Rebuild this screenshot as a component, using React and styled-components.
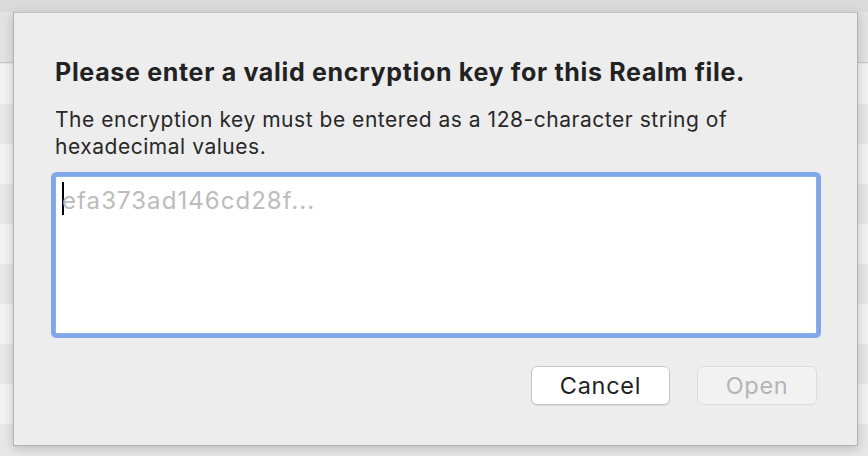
import React from "react";
import styled, { createGlobalStyle } from "styled-components";

const GlobalStyle = createGlobalStyle`
  html, body {
    margin: 0;
    padding: 0;
    width: 868px;
    height: 456px;
    overflow: hidden;
  }
  body {
    font-family: Inter, "Noto Sans", "Liberation Sans", sans-serif;
    -webkit-font-smoothing: antialiased;
  }
`;

const App = () => {
  return (
    <>
      <GlobalStyle />
      <Page>
        <WindowStrip />
        <WindowBody>
          <Sheet>
            <Title>Please enter a valid encryption key for this Realm file.</Title>
            <Message>
              The encryption key must be entered as a 128-character string of
              hexadecimal values.
            </Message>
            <KeyField>
              <Caret />
              <Placeholder>efa373ad146cd28f...</Placeholder>
            </KeyField>
            <Actions>
              <Button>Cancel</Button>
              <Button $disabled>Open</Button>
            </Actions>
          </Sheet>
        </WindowBody>
      </Page>
    </>
  );
};

export default App;

// ---------- Styled Components ----------
const Page = styled.div`
  display: flex;
  flex-direction: column;
  width: 868px;
  height: 456px;
  background: #e6e6e6;
`;

const WindowStrip = styled.div`
  height: 12px;
  flex-shrink: 0;
  background: #dadada;
`;

const WindowBody = styled.div`
  flex: 1;
  display: flex;
  align-items: flex-start;
  padding-left: 13px;
  background:
    linear-gradient(#e2e2e2, #e2e2e2) 0 0 / 100% 50px no-repeat,
    linear-gradient(#c8c8c8, #c8c8c8) 0 50px / 100% 1px no-repeat,
    repeating-linear-gradient(#e7e7e7 0 40px, #f2f2f2 40px 80px) 0 12px / 100% 80px;
`;

const Sheet = styled.div`
  box-sizing: border-box;
  width: 845px;
  height: 434px;
  display: flex;
  flex-direction: column;
  padding: 0 40px 0 41px;
  background: #ededed;
  border: 1px solid #b2b2b2;
  border-top-color: #c4c4c4;
  box-shadow: 0 3px 10px rgba(0, 0, 0, 0.18);
`;

const Title = styled.h1`
  margin: 44px 0 0;
  font-size: 25px;
  line-height: 30px;
  font-weight: 700;
  color: #222222;
  letter-spacing: 0.68px;
  white-space: nowrap;
`;

const Message = styled.p`
  margin: 19px 0 0;
  font-size: 21px;
  line-height: 27px;
  font-weight: 400;
  color: #282828;
  letter-spacing: 0.53px;
  max-width: 700px;
`;

const KeyField = styled.div`
  box-sizing: border-box;
  margin-top: 16px;
  height: 158px;
  display: flex;
  align-items: flex-start;
  padding: 5px 6px;
  background: #ffffff;
  border: 1px solid #8cb0ea;
  border-radius: 2px;
  box-shadow: 0 0 0 4px #7fa7ea;
`;

const Caret = styled.span`
  width: 2px;
  height: 33px;
  flex-shrink: 0;
  margin-right: -2px;
  background: #000000;
`;

const Placeholder = styled.span`
  margin-top: 2px;
  font-size: 24px;
  line-height: 34px;
  color: #bcbcbc;
  letter-spacing: 1.05px;
`;

const Actions = styled.div`
  display: flex;
  justify-content: flex-end;
  gap: 27px;
  margin-top: 32px;
`;

const Button = styled.div`
  box-sizing: border-box;
  height: 39px;
  min-width: ${({ $disabled }) => ($disabled ? "120px" : "139px")};
  display: flex;
  align-items: center;
  justify-content: center;
  font-size: 23.5px;
  letter-spacing: 0.7px;
  color: ${({ $disabled }) => ($disabled ? "#b4b4b4" : "#1f1f1f")};
  background: ${({ $disabled }) => ($disabled ? "#f2f2f2" : "#ffffff")};
  border: 1px solid ${({ $disabled }) => ($disabled ? "#dcdcdc" : "#c6c6c6")};
  border-radius: 6px;
  box-shadow: ${({ $disabled }) =>
    $disabled ? "none" : "0 1px 1px rgba(0, 0, 0, 0.08)"};
`;
